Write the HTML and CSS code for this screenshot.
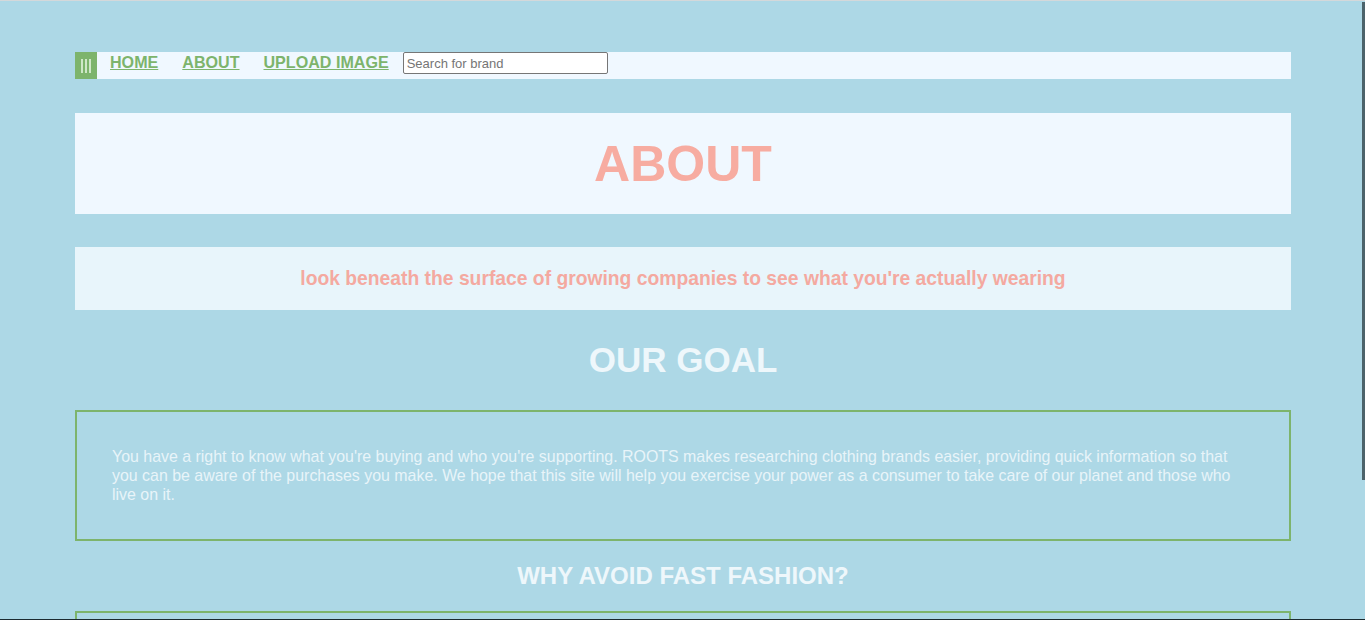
FILE: index.html
```html
<!DOCTYPE html>
<html lang="en">
<head>
<meta charset="utf-8">
<title>About - ROOTS</title>
<link rel="stylesheet" href="styles.css">
</head>
<body>
<div class="page">
  <nav class="nav">
    <a class="menu" href="#"><span></span><span></span><span></span></a>
    <a class="nav-link" href="#">HOME</a>
    <a class="nav-link" href="#">ABOUT</a>
    <a class="nav-link" href="#">UPLOAD IMAGE</a>
    <input class="search" type="text" placeholder="Search for brand">
  </nav>

  <header class="title-box">
    <h1>ABOUT</h1>
  </header>

  <div class="tagline-box">
    <p>look beneath the surface of growing companies to see what you're actually wearing</p>
  </div>

  <div class="section-head">
    <h2>OUR GOAL</h2>
  </div>

  <div class="text-box">
    <p>You have a right to know what you're buying and who you're supporting. ROOTS makes researching clothing brands easier, providing quick information so that you can be aware of the purchases you make. We hope that this site will help you exercise your power as a consumer to take care of our planet and those who live on it.</p>
  </div>

  <div class="section-head small">
    <h3>WHY AVOID FAST FASHION?</h3>
  </div>

  <div class="text-box empty"></div>
</div>
<div class="frame"><div class="thumb"></div></div>
</body>
</html>
```

FILE: styles.css
```css
html {
  overflow: hidden;
  background: #add8e6;
}

body {
  margin: 0;
  background: #add8e6;
  font-family: "Liberation Sans", Arial, sans-serif;
}

.page {
  padding: 52px 74px 40px 75px;
}

.nav {
  display: flex;
  align-items: flex-start;
  height: 27px;
  background: #f0f8ff;
}

.menu {
  display: flex;
  justify-content: center;
  align-items: center;
  gap: 2px;
  width: 22px;
  height: 27px;
  background: #7db46c;
  margin-right: 13px;
}

.menu span {
  display: block;
  width: 2px;
  height: 14px;
  background: #cfe8c8;
}

.nav-link {
  color: #7db46c;
  font-weight: bold;
  font-size: 16.1px;
  text-decoration: underline;
  margin-right: 24px;
  line-height: 21px;
}

.nav-link:nth-of-type(4) {
  margin-right: 14px;
}

.search {
  box-sizing: border-box;
  width: 205px;
  height: 22px;
  margin: 0;
  padding: 1px 3px;
  border: 1px solid #767676;
  border-radius: 2px;
  font-family: "Liberation Sans", Arial, sans-serif;
  font-size: 13px;
  background: #fff;
}

.search::placeholder {
  color: #757575;
}

.title-box {
  margin-top: 34px;
  height: 101px;
  background: #f0f8ff;
  display: flex;
  align-items: center;
  justify-content: center;
}

.title-box h1 {
  margin: 0;
  font-size: 50px;
  color: #f7aca1;
}

.tagline-box {
  margin-top: 33px;
  height: 63px;
  background: #e8f5fb;
  display: flex;
  align-items: center;
  justify-content: center;
}

.tagline-box p {
  margin: 0;
  font-weight: bold;
  font-size: 19.3px;
  color: #f4a9a0;
}

.section-head {
  height: 100px;
  display: flex;
  align-items: center;
  justify-content: center;
}

.section-head.small {
  height: 70px;
}

.section-head h2 {
  margin: 0;
  font-size: 35px;
  color: #eef7fb;
}

.section-head h3 {
  margin: 0;
  font-size: 24px;
  color: #eef7fb;
}

.text-box {
  border: 2px solid #7db46c;
  padding: 35px 48px 35px 35px;
}

.text-box.empty {
  height: 100px;
}

.text-box p {
  margin: 0;
  font-size: 15.93px;
  line-height: 19px;
  color: #e8f4f9;
}

.frame {
  position: fixed;
  inset: 0;
  border-top: 1px solid #d4d8da;
  border-bottom: 1px solid #1c2a30;
  pointer-events: none;
}

.thumb {
  position: absolute;
  right: 0;
  top: 1px;
  width: 3px;
  height: 478px;
  background: #4c636b;
}
```
